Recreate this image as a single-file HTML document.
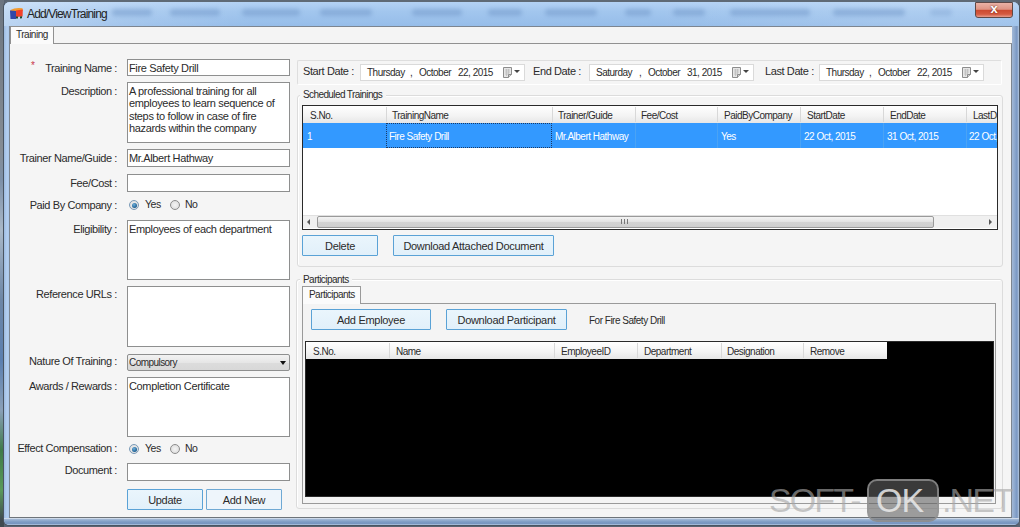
<!DOCTYPE html>
<html><head><meta charset="utf-8">
<style>
*{margin:0;padding:0;box-sizing:border-box}
html,body{width:1020px;height:527px;overflow:hidden;background:#5a6472}
body{position:relative;font-family:"Liberation Sans",sans-serif;font-size:11px;color:#2b2b2b}
.a{position:absolute}
.win{left:3px;top:0;width:1017px;height:526px;border-radius:7px 7px 6px 6px;background:linear-gradient(90deg,#9dbbe0,#b4cff0 3px,#a4c3e8 6px,#a4c3e8 1004px,#a2b8d6 1008px,#8aa6cc 1011px,#7896c2 1013px,#b4c8e0 1015px);border:1px solid #4a5562;border-top:2px solid #5f6a76}
.ttl{left:4px;top:2px;width:1015px;height:24px;border-radius:6px 6px 0 0;background:linear-gradient(#b4d2f4,#a2c6ee 40%,#96bde9)}
.blur{filter:blur(2px);background:#7096c8;height:7px;border-radius:3px;opacity:.5}
.content{left:9px;top:26px;width:1003px;height:492px;background:#f5f5f5;border:1px solid #7c8590;border-bottom-color:#6e747a}
.lbl{position:absolute;white-space:nowrap;letter-spacing:-0.4px;text-align:right}
.tb{position:absolute;background:#fff;border:1px solid #8e8f8f;white-space:nowrap;letter-spacing:-0.35px;padding:2px 0 0 1px;line-height:12.4px;overflow:hidden}
.btn{position:absolute;border:1px solid #5aa2d6;background:linear-gradient(#eaf5fc,#e1f0fa);text-align:center;letter-spacing:-0.3px;border-radius:1px;padding-top:1px}
.hdr{position:absolute;white-space:nowrap;letter-spacing:-0.5px;font-size:10px}
.radio{position:absolute;width:10px;height:10px;border-radius:50%;border:1px solid #8c8c8c;background:radial-gradient(circle,#f4f4f4,#d8d8d8)}
.radio.on{border-color:#7a9ab8}.radio.on::after{content:"";position:absolute;left:1.5px;top:1.5px;width:5px;height:5px;border-radius:50%;background:radial-gradient(circle at 40% 35%,#6fb0dc,#1d5f92 70%,#2a5a80)}
.dp{position:absolute;height:17px;background:#fff;border:1px solid #dadada;white-space:nowrap;letter-spacing:-0.5px;font-size:10px}
.dp span{position:absolute;top:2px}
.cal{position:absolute;top:2px;width:10px;height:10px;border:1px solid #999;background:linear-gradient(#ececec,#c4c4c4);border-radius:1px;box-shadow:inset 2px 2px 0 -1px #fff}
.arr{position:absolute;top:5px;width:0;height:0;border-left:3px solid transparent;border-right:3px solid transparent;border-top:3px solid #444}
</style></head><body>
<div class="a" style="left:0;top:0;width:4px;height:527px;background:linear-gradient(#6c7580,#858c94 150px,#7d90a8 180px,#a9b8c8 230px,#6d86a6 300px,#5b7fb0 360px,#8aa0b8 410px,#3f7a4a 450px,#5a9a5a 490px,#404a50 520px)"></div>
<div class="a win"></div>
<div class="a ttl"></div>
<div class="a" style="left:4px;top:2px;width:1015px;height:24px;border-radius:6px 6px 0 0;background:linear-gradient(90deg,rgba(255,255,255,.35),rgba(255,255,255,.12) 120px,rgba(255,255,255,0) 250px,rgba(255,255,255,0) 650px,rgba(255,255,255,.12) 900px,rgba(255,255,255,.1))"></div>
<div class="a" style="left:4px;top:518px;width:1015px;height:7px;border-radius:0 0 5px 5px;background:linear-gradient(#e8eef6,#9fb6d4 20%,#7e9cc4 55%,#7896c0 80%,#b8cce4)"></div>
<!-- blurred title glass text -->
<div class="a blur" style="left:112px;top:9px;width:40px"></div>
<div class="a blur" style="left:170px;top:9px;width:50px"></div>
<div class="a blur" style="left:242px;top:9px;width:58px"></div>
<div class="a blur" style="left:320px;top:9px;width:52px"></div>
<div class="a blur" style="left:412px;top:9px;width:50px"></div>
<div class="a blur" style="left:488px;top:9px;width:34px"></div>
<div class="a blur" style="left:545px;top:9px;width:52px"></div>
<div class="a blur" style="left:625px;top:9px;width:26px"></div>
<div class="a blur" style="left:673px;top:9px;width:32px"></div>
<div class="a blur" style="left:730px;top:9px;width:80px"></div>
<div class="a blur" style="left:833px;top:9px;width:72px"></div>
<div class="a blur" style="left:930px;top:9px;width:22px;opacity:.3"></div>
<!-- icon -->
<div class="a" style="left:9px;top:7px;width:15px;height:13px">
<svg width="15" height="13" viewBox="0 0 15 13"><path d="M1.5 3 Q6 0.2 13.5 1.2 L13.8 4 L7 4.5 L1.5 4.5Z" fill="#f29a2e"/><path d="M1 3.5 L7 4 L7 12 L1.5 12Z" fill="#3347a8"/><path d="M7 3.5 L13.8 2.5 L13.6 9.5 L7 10Z" fill="#f2402a"/><path d="M7 9.5 L9 9.5 L9 11.5 L7 11.5Z" fill="#1f4a30"/><path d="M11 9.5 L13 9.3 L13 11.3 L11 11.5Z" fill="#1f4a30"/></svg>
</div>
<div class="a" style="left:27px;top:7px;font-size:12px;letter-spacing:-0.85px;color:#222">Add/ViewTraining</div>
<!-- close button -->
<div class="a" style="left:975px;top:2px;width:38px;height:16px;border:1px solid #5e4846;border-radius:0 0 3px 3px;background:linear-gradient(#eab2a6,#de9484 45%,#cc4a30 52%,#d45a40 80%,#e79c8c)"></div>
<div class="a" style="left:987px;top:2px;width:14px;height:14px;color:#fff;font-weight:bold;font-size:13px;text-align:center;line-height:14px;text-shadow:0 0 2px #5a1a10">x</div>

<div class="a content"></div>
<!-- tab strip -->
<div class="a" style="left:11px;top:27px;width:1001px;height:16px;background:#f4f4f4"></div>
<div class="a" style="left:53px;top:43px;width:959px;height:1px;background:#919191"></div>
<div class="a" style="left:10px;top:26px;width:44px;height:18px;background:#fbfbfb;border:1px solid #919191;border-bottom:none"></div>
<div class="a" style="left:16px;top:29px;font-size:10px;letter-spacing:-0.5px">Training</div>

<!-- left form labels -->
<div class="a" style="left:31px;top:60px;color:#c8354a;font-size:10px">*</div>
<div class="lbl" style="right:903px;top:62px">Training Name :</div>
<div class="lbl" style="right:903px;top:85px">Description :</div>
<div class="lbl" style="right:903px;top:152px">Trainer Name/Guide :</div>
<div class="lbl" style="right:903px;top:177px">Fee/Cost :</div>
<div class="lbl" style="right:903px;top:199px">Paid By Company :</div>
<div class="lbl" style="right:903px;top:223px">Eligibility :</div>
<div class="lbl" style="right:903px;top:288px">Reference URLs :</div>
<div class="lbl" style="right:903px;top:355px">Nature Of Training :</div>
<div class="lbl" style="right:903px;top:380px">Awards / Rewards :</div>
<div class="lbl" style="right:903px;top:442px">Effect Compensation :</div>
<div class="lbl" style="right:903px;top:464px">Document :</div>

<!-- left form inputs -->
<div class="tb" style="left:127px;top:59px;width:163px;height:17px">Fire Safety Drill</div>
<div class="tb" style="left:127px;top:82px;width:163px;height:61px;white-space:normal;padding-right:8px">A professional training for all employees to learn sequence of steps to follow in case of fire hazards within the company</div>
<div class="tb" style="left:127px;top:149px;width:163px;height:18px">Mr.Albert Hathway</div>
<div class="tb" style="left:127px;top:174px;width:163px;height:18px"></div>
<div class="radio on" style="left:129px;top:200px"></div>
<div class="a" style="left:145px;top:198px;font-size:10.5px;letter-spacing:-0.5px">Yes</div>
<div class="radio" style="left:170px;top:200px"></div>
<div class="a" style="left:185px;top:198px;font-size:10.5px;letter-spacing:-0.5px">No</div>
<div class="tb" style="left:127px;top:220px;width:163px;height:60px;white-space:normal">Employees of each department</div>
<div class="tb" style="left:127px;top:286px;width:163px;height:61px"></div>
<div class="a" style="left:127px;top:354px;width:163px;height:17px;border:1px solid #8e8f8f;border-radius:2px;background:linear-gradient(#f2f2f2,#e6e6e6 50%,#dcdcdc 51%,#d8d8d8)"></div>
<div class="a" style="left:129px;top:357px;font-size:10px;letter-spacing:-0.55px">Compulsory</div>
<div class="a" style="left:280px;top:361px;border-left:3.5px solid transparent;border-right:3.5px solid transparent;border-top:4px solid #111"></div>
<div class="tb" style="left:127px;top:377px;width:163px;height:60px">Completion Certificate</div>
<div class="radio on" style="left:129px;top:444px"></div>
<div class="a" style="left:145px;top:442px;font-size:10.5px;letter-spacing:-0.5px">Yes</div>
<div class="radio" style="left:170px;top:444px"></div>
<div class="a" style="left:185px;top:442px;font-size:10.5px;letter-spacing:-0.5px">No</div>
<div class="tb" style="left:127px;top:463px;width:163px;height:18px"></div>
<div class="btn" style="left:127px;top:489px;width:76px;height:21px;line-height:19px">Update</div>
<div class="btn" style="left:206px;top:489px;width:76px;height:21px;line-height:19px;border-color:#6fa9d4;background:#eef5fb">Add New</div>

<!-- right: date panel -->
<div class="a" style="left:297px;top:60px;width:705px;height:25px;border:1px solid #dedede;border-right-color:#fff;border-bottom-color:#fff;border-radius:2px"></div>
<div class="lbl" style="left:303px;top:65px">Start Date :</div>
<div class="dp" style="left:360px;top:64px;width:165px"><span style="left:6px">Thursday</span><span style="left:49px">,</span><span style="left:58px">October</span><span style="left:97px">22, 2015</span><svg class="a" style="left:142px;top:2px" width="9" height="11" viewBox="0 0 9 11"><path d="M0.5 0.5 H8.5 V7.5 L5.5 10.5 H0.5Z" fill="#e6e6e6" stroke="#8c8c8c"/><path d="M2 3H7M2 5H7M2 7H5M3.5 2V9M5.5 2V7" stroke="#bdbdbd" stroke-width="0.8"/><path d="M5.5 10.5 V7.5 H8.5" fill="#d0d0d0" stroke="#8c8c8c"/></svg><div class="arr" style="left:153px"></div></div>
<div class="lbl" style="left:533px;top:65px">End Date :</div>
<div class="dp" style="left:589px;top:64px;width:165px"><span style="left:6px">Saturday</span><span style="left:49px">,</span><span style="left:58px">October</span><span style="left:97px">31, 2015</span><svg class="a" style="left:142px;top:2px" width="9" height="11" viewBox="0 0 9 11"><path d="M0.5 0.5 H8.5 V7.5 L5.5 10.5 H0.5Z" fill="#e6e6e6" stroke="#8c8c8c"/><path d="M2 3H7M2 5H7M2 7H5M3.5 2V9M5.5 2V7" stroke="#bdbdbd" stroke-width="0.8"/><path d="M5.5 10.5 V7.5 H8.5" fill="#d0d0d0" stroke="#8c8c8c"/></svg><div class="arr" style="left:153px"></div></div>
<div class="lbl" style="left:765px;top:65px">Last Date :</div>
<div class="dp" style="left:819px;top:64px;width:165px"><span style="left:6px">Thursday</span><span style="left:49px">,</span><span style="left:58px">October</span><span style="left:97px">22, 2015</span><svg class="a" style="left:142px;top:2px" width="9" height="11" viewBox="0 0 9 11"><path d="M0.5 0.5 H8.5 V7.5 L5.5 10.5 H0.5Z" fill="#e6e6e6" stroke="#8c8c8c"/><path d="M2 3H7M2 5H7M2 7H5M3.5 2V9M5.5 2V7" stroke="#bdbdbd" stroke-width="0.8"/><path d="M5.5 10.5 V7.5 H8.5" fill="#d0d0d0" stroke="#8c8c8c"/></svg><div class="arr" style="left:153px"></div></div>

<!-- scheduled trainings group -->
<div class="a" style="left:297px;top:95px;width:706px;height:172px;border:1px solid #dcdcdc;border-radius:3px;box-shadow:inset 1px 1px 0 #fff"></div>
<div class="a" style="left:300px;top:93px;width:86px;height:5px;background:#f5f5f5"></div>
<div class="lbl" style="left:303px;top:89px;font-size:10px;letter-spacing:-0.6px">Scheduled Trainings</div>
<!-- grid -->
<div class="a" style="left:302px;top:105px;width:696px;height:125px;background:#fff;border:1px solid #2a2a2a"></div>
<div class="a" style="left:303px;top:106px;width:694px;height:17px;background:linear-gradient(#ffffff,#f3f3f3 60%,#e6e6e6)"></div>
<div class="a" style="left:303px;top:123px;width:694px;height:25px;background:#3399ff"></div>
<div class="a" style="left:386px;top:123px;width:166px;height:25px;border:1px dotted #1a3a66"></div>
<div class="a" style="left:386px;top:107px;width:1px;height:15px;background:#d8d8d8"></div><div class="a" style="left:552px;top:107px;width:1px;height:15px;background:#d8d8d8"></div><div class="a" style="left:635px;top:107px;width:1px;height:15px;background:#d8d8d8"></div><div class="a" style="left:717px;top:107px;width:1px;height:15px;background:#d8d8d8"></div><div class="a" style="left:800px;top:107px;width:1px;height:15px;background:#d8d8d8"></div><div class="a" style="left:883px;top:107px;width:1px;height:15px;background:#d8d8d8"></div><div class="a" style="left:966px;top:107px;width:1px;height:15px;background:#d8d8d8"></div>
<div class="hdr" style="left:310px;top:110px">S.No.</div>
<div class="hdr" style="left:392px;top:110px">TrainingName</div>
<div class="hdr" style="left:558px;top:110px">Trainer/Guide</div>
<div class="hdr" style="left:641px;top:110px">Fee/Cost</div>
<div class="hdr" style="left:724px;top:110px">PaidByCompany</div>
<div class="hdr" style="left:807px;top:110px">StartDate</div>
<div class="hdr" style="left:890px;top:110px">EndDate</div>
<div class="hdr" style="left:973px;top:110px;width:24px;overflow:hidden">LastDate</div>
<div class="a" style="left:635px;top:123px;width:1px;height:25px;background:#4aa3f5"></div><div class="a" style="left:717px;top:123px;width:1px;height:25px;background:#4aa3f5"></div><div class="a" style="left:800px;top:123px;width:1px;height:25px;background:#4aa3f5"></div><div class="a" style="left:883px;top:123px;width:1px;height:25px;background:#4aa3f5"></div><div class="a" style="left:966px;top:123px;width:1px;height:25px;background:#4aa3f5"></div>
<div class="hdr" style="left:307px;top:131px;color:#fff">1</div>
<div class="hdr" style="left:389px;top:131px;color:#fff">Fire Safety Drill</div>
<div class="hdr" style="left:555px;top:131px;color:#fff">Mr.Albert Hathway</div>
<div class="hdr" style="left:721px;top:131px;color:#fff">Yes</div>
<div class="hdr" style="left:804px;top:131px;color:#fff">22 Oct, 2015</div>
<div class="hdr" style="left:887px;top:131px;color:#fff">31 Oct, 2015</div>
<div class="hdr" style="left:969px;top:131px;color:#fff;width:28px;overflow:hidden">22 Oct, 2015</div>
<!-- scrollbar -->
<div class="a" style="left:303px;top:215px;width:694px;height:13px;background:#f0f0f0;border-top:1px solid #e0e0e0"></div>
<div class="a" style="left:317px;top:216px;width:617px;height:12px;border:1px solid #9a9a9a;border-radius:2px;background:linear-gradient(#f4f4f4,#e2e2e2 50%,#d4d4d4 51%,#cfcfcf)"></div>
<div class="a" style="left:307px;top:219px;border-top:3px solid transparent;border-bottom:3px solid transparent;border-right:3px solid #555"></div>
<div class="a" style="left:989px;top:219px;border-top:3px solid transparent;border-bottom:3px solid transparent;border-left:3px solid #555"></div>
<div class="a" style="left:621px;top:219px;width:7px;height:5px;border-left:1px solid #777;border-right:1px solid #777"></div>
<div class="a" style="left:624px;top:219px;width:1px;height:5px;background:#777"></div>
<div class="btn" style="left:302px;top:235px;width:76px;height:21px;line-height:19px">Delete</div>
<div class="btn" style="left:393px;top:235px;width:161px;height:21px;line-height:19px">Download Attached Document</div>

<!-- participants group -->
<div class="a" style="left:296px;top:279px;width:707px;height:230px;border:1px solid #dcdcdc;border-radius:3px;box-shadow:inset 1px 1px 0 #fff"></div>
<div class="a" style="left:300px;top:277px;width:52px;height:5px;background:#f5f5f5"></div>
<div class="lbl" style="left:303px;top:274px;font-size:10px;letter-spacing:-0.55px">Participants</div>
<div class="a" style="left:302px;top:303px;width:694px;height:201px;border:1px solid #9a9a9a;background:#f4f4f4"></div>
<div class="a" style="left:302px;top:286px;width:59px;height:18px;background:#fbfbfb;border:1px solid #9a9a9a;border-bottom:none"></div>
<div class="lbl" style="left:309px;top:289px;font-size:10px;letter-spacing:-0.55px">Participants</div>
<div class="btn" style="left:311px;top:309px;width:120px;height:21px;line-height:19px">Add Employee</div>
<div class="btn" style="left:446px;top:309px;width:121px;height:21px;line-height:19px">Download Participant</div>
<div class="lbl" style="left:589px;top:315px;font-size:10px;letter-spacing:-0.5px">For Fire Safety Drill</div>
<div class="a" style="left:305px;top:341px;width:689px;height:156px;background:#000;border:1px solid #2a2a2a"></div>
<div class="a" style="left:306px;top:342px;width:581px;height:17px;background:linear-gradient(#ffffff,#f3f3f3 60%,#e6e6e6)"></div>
<div class="a" style="left:389px;top:343px;width:1px;height:15px;background:#d8d8d8"></div><div class="a" style="left:554px;top:343px;width:1px;height:15px;background:#d8d8d8"></div><div class="a" style="left:637px;top:343px;width:1px;height:15px;background:#d8d8d8"></div><div class="a" style="left:721px;top:343px;width:1px;height:15px;background:#d8d8d8"></div><div class="a" style="left:803px;top:343px;width:1px;height:15px;background:#d8d8d8"></div>
<div class="hdr" style="left:313px;top:346px">S.No.</div>
<div class="hdr" style="left:396px;top:346px">Name</div>
<div class="hdr" style="left:561px;top:346px">EmployeeID</div>
<div class="hdr" style="left:644px;top:346px">Department</div>
<div class="hdr" style="left:727px;top:346px">Designation</div>
<div class="hdr" style="left:810px;top:346px">Remove</div>

<!-- watermark -->
<div class="a" style="left:867px;top:479px;width:72px;height:43px;border-radius:10px;background:rgba(97,97,97,.6);border:2px solid rgba(150,150,150,.75)"></div>
<div class="a" style="left:769px;top:481px;font-size:34px;line-height:38px;letter-spacing:-1.9px;color:rgba(168,168,168,.63)">SOFT-</div>
<div class="a" style="left:876px;top:481px;font-size:34px;line-height:38px;letter-spacing:-1px;color:rgba(235,235,235,.85)">OK</div>
<div class="a" style="left:942px;top:481px;font-size:34px;line-height:38px;letter-spacing:-1.9px;color:rgba(168,168,168,.63)">.NET</div>
</body></html>
